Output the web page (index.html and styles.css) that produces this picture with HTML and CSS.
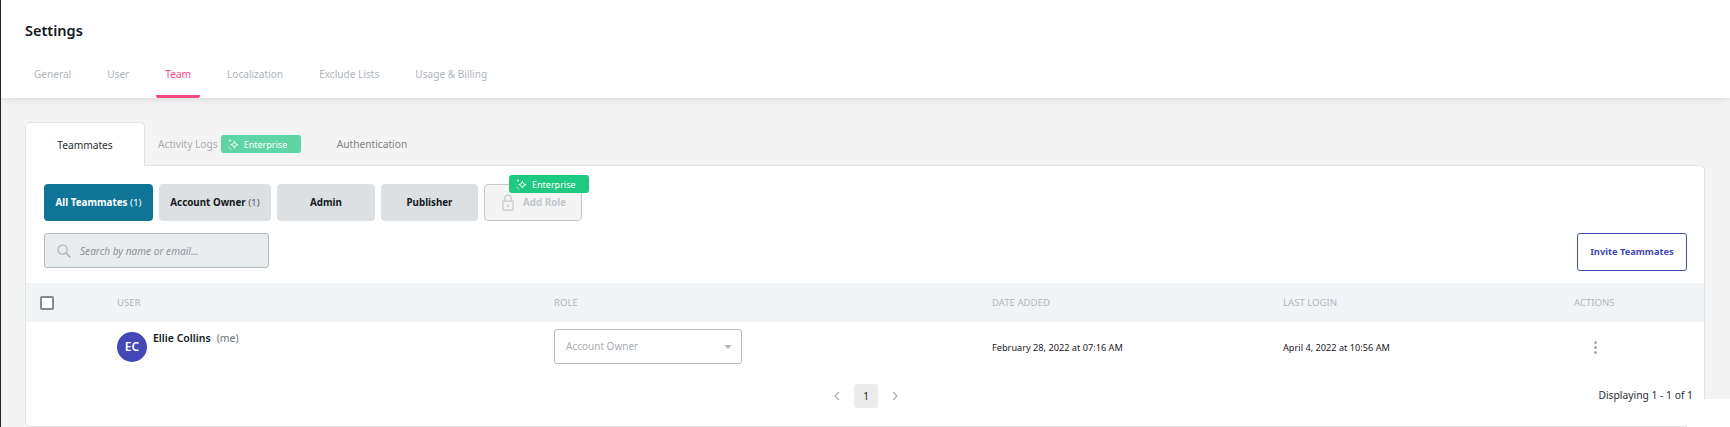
FILE: index.html
```html
<!DOCTYPE html>
<html lang="en">
<head>
<meta charset="UTF-8">
<meta name="viewport" content="width=device-width, initial-scale=1.0">
<title>Settings</title>
<link rel="stylesheet" href="styles.css">
</head>
<body>

<svg class="icon-defs" aria-hidden="true">
    <symbol id="sparkle" viewBox="0 0 12 12">
        <path d="M7 2.4 L8.1 5.1 L11 6.2 L8.1 7.3 L7 10 L5.9 7.3 L3 6.2 L5.9 5.1 Z" fill="none" stroke="#fff" stroke-width="1"/>
        <circle cx="2.2" cy="1.6" r="1" fill="#fff"/>
        <circle cx="1.2" cy="9.4" r="0.8" fill="#fff"/>
        <circle cx="3.2" cy="11" r="0.6" fill="#fff"/>
    </symbol>
</svg>

<div class="page">
    <header class="top">
        <h1>Settings</h1>
        <nav class="nav">
            <a>General</a>
            <a>User</a>
            <a class="active">Team</a>
            <a>Localization</a>
            <a>Exclude Lists</a>
            <a>Usage &amp; Billing</a>
        </nav>
    </header>

    <main class="content">
        <div class="tabs">
            <div class="tab tab-active">Teammates</div>
            <div class="tab tab-logs">Activity Logs</div>
            <div class="badge badge-faded"><svg class="sparkle"><use href="#sparkle"/></svg>Enterprise</div>
            <div class="tab tab-auth">Authentication</div>
        </div>

        <section class="card">
            <div class="roles">
                <button class="role role-active">All Teammates <span class="count">(1)</span></button>
                <button class="role role-owner">Account Owner <span class="count">(1)</span></button>
                <button class="role role-admin">Admin</button>
                <button class="role role-publisher">Publisher</button>
                <button class="role role-add">
                    <svg class="lock" viewBox="0 0 14 20">
                        <path d="M3.2 8.5 V5 a3.8 3.8 0 0 1 7.6 0 V8.5" fill="none" stroke="#c6cacd" stroke-width="1.5"/>
                        <rect x="1" y="8.5" width="12" height="10.5" rx="1" fill="none" stroke="#c6cacd" stroke-width="1.5"/>
                        <circle cx="7" cy="13.8" r="1.2" fill="#c6cacd"/>
                    </svg>
                    Add Role
                    <span class="badge badge-float"><svg class="sparkle"><use href="#sparkle"/></svg>Enterprise</span>
                </button>
            </div>

            <div class="toolbar">
                <div class="search">
                    <svg class="search-icon" viewBox="0 0 14 14">
                        <circle cx="5.6" cy="5.6" r="4.6" fill="none" stroke="#a9aeb2" stroke-width="1.2"/>
                        <path d="M9 9 L13.2 13.2" stroke="#a9aeb2" stroke-width="1.4"/>
                    </svg>
                    <span>Search by name or email...</span>
                </div>
                <button class="invite">Invite Teammates</button>
            </div>

            <div class="row row-head">
                <div><span class="checkbox"></span></div>
                <div>USER</div>
                <div>ROLE</div>
                <div>DATE ADDED</div>
                <div>LAST LOGIN</div>
                <div>ACTIONS</div>
            </div>

            <div class="row row-body">
                <div></div>
                <div class="user">
                    <span class="avatar">EC</span>
                    <span class="user-name">Ellie Collins</span>
                    <span class="user-me">(me)</span>
                </div>
                <div>
                    <div class="select">Account Owner<span class="caret"></span></div>
                </div>
                <div class="cell-date">February 28, 2022 at 07:16 AM</div>
                <div class="cell-date">April 4, 2022 at 10:56 AM</div>
                <div class="dots"><i></i><i></i><i></i></div>
            </div>

            <div class="pager">
                <div></div>
                <div class="pages">
                    <svg class="chevron" viewBox="0 0 6 10"><path d="M5 1 L1 5 L5 9" fill="none" stroke="#a5a9ad" stroke-width="1.1"/></svg>
                    <span class="page-num">1</span>
                    <svg class="chevron" viewBox="0 0 6 10"><path d="M1 1 L5 5 L1 9" fill="none" stroke="#a5a9ad" stroke-width="1.1"/></svg>
                </div>
                <div class="displaying">Displaying 1 - 1 of 1</div>
            </div>
        </section>
    </main>

    <div class="corner"></div>
</div>

</body>
</html>
```

FILE: styles.css
```css
* {
    box-sizing: border-box;
}

html, body {
    margin: 0;
    height: 427px;
    overflow: hidden;
}

body {
    font-family: "Noto Sans", "Open Sans", Arial, sans-serif;
    background-color: #f4f4f4;
    color: #1c2025;
}

.icon-defs {
    display: none;
}

.page {
    position: relative;
    height: 427px;
    border-left: 1px solid #22262b;
    overflow: hidden;
}

/* top bar */
.top {
    height: 98px;
    padding: 21px 0 0 24px;
    background-color: #fff;
    box-shadow: 0 1px 8px rgba(0, 0, 0, 0.12);
    position: relative;
}

.top h1 {
    margin: 0;
    font-size: 14.5px;
    line-height: 18px;
    font-weight: 600;
    color: #15181c;
}

.nav {
    display: flex;
    gap: 18px;
    margin-top: 16px;
}

.nav a {
    height: 43px;
    padding: 11px 9px 0;
    font-size: 10.1px;
    line-height: 16px;
    color: #aeb4bb;
    border-bottom: 3px solid transparent;
}

.nav a.active {
    color: #f9497f;
    border-bottom-color: #f9497f;
    border-radius: 0 0 2px 2px;
}

/* tabs */
.content {
    padding: 24px 25px 0 24px;
}

.tabs {
    display: flex;
    align-items: center;
    height: 44px;
    margin-bottom: -1px;
    position: relative;
    z-index: 1;
}

.tab {
    font-size: 10.2px;
    color: #7f8388;
}

.tab-active {
    display: flex;
    align-items: center;
    justify-content: center;
    width: 120px;
    height: 44px;
    background-color: #fff;
    border: 1px solid #e0e2e4;
    border-bottom: none;
    border-radius: 5px 5px 0 0;
    color: #2a2e33;
}

.tab-logs {
    margin-left: 13px;
    color: #a9adb1;
}

.tab-auth {
    margin-left: 36px;
}

.badge {
    display: inline-flex;
    align-items: center;
    width: 80px;
    height: 18px;
    padding-left: 7px;
    border-radius: 3px;
    font-size: 9px;
    font-weight: 400;
    color: #fff;
    background-color: #1fc97f;
}

.badge-faded {
    margin-left: 3px;
    background-color: #5fd5a3;
}

.badge-float {
    position: absolute;
    top: -10px;
    left: 24px;
}

.sparkle {
    width: 11px;
    height: 11px;
    margin-right: 5px;
}

/* card */
.card {
    height: 262px;
    padding-top: 18px;
    background-color: #fff;
    border: 1px solid #e0e2e4;
    border-radius: 0 5px 5px 5px;
}

.roles {
    display: flex;
    gap: 6px;
    padding-left: 18px;
}

button {
    font-family: inherit;
    cursor: pointer;
}

.role {
    height: 37px;
    padding: 0;
    border: none;
    border-radius: 4px;
    font-size: 9.8px;
    font-weight: 700;
    background-color: #dce0e3;
    color: #15181c;
}

.role .count {
    font-weight: 400;
    color: #555b61;
}

.role-active {
    width: 109px;
    background-color: #0e7596;
    color: #fff;
}

.role-active .count {
    color: #fff;
}

.role-owner {
    width: 112px;
}

.role-admin {
    width: 98px;
}

.role-publisher {
    width: 97px;
}

.role-add {
    position: relative;
    display: flex;
    align-items: center;
    gap: 9px;
    width: 98px;
    padding-left: 17px;
    background-color: #f4f4f4;
    border: 1px solid #c4c8cb;
    color: #c2c7cb;
}

.lock {
    width: 12px;
    height: 17px;
}

.toolbar {
    display: flex;
    justify-content: space-between;
    align-items: flex-start;
    margin-top: 12px;
    padding: 0 17px 0 18px;
}

.search {
    display: flex;
    align-items: center;
    gap: 9px;
    width: 225px;
    height: 35px;
    padding-left: 12px;
    background-color: #e9edf0;
    border: 1px solid #b5babd;
    border-radius: 3px;
    font-size: 10.1px;
    font-style: italic;
    color: #8d9296;
}

.search-icon {
    width: 14px;
    height: 14px;
}

.invite {
    width: 110px;
    height: 38px;
    padding: 0 0 2px;
    background-color: #fff;
    border: 1px solid #4447b6;
    border-radius: 3px;
    font-size: 9.3px;
    font-weight: 700;
    color: #4447b6;
}

/* table */
.row {
    display: grid;
    grid-template-columns: 91px 437px 438px 291px 291px 1fr;
    align-items: center;
}

.row-head {
    height: 39px;
    margin-top: 12px;
    background-color: #f1f4f7;
    font-size: 9.6px;
    color: #b1b6bc;
}

.checkbox {
    display: block;
    width: 14px;
    height: 14px;
    margin-left: 14px;
    background-color: #fff;
    border: 2px solid #85898d;
    border-radius: 2px;
}

.row-body {
    height: 62px;
    padding-top: 7px;
    align-items: start;
    font-size: 9.2px;
    color: #1c2025;
}

.user {
    display: flex;
    align-items: flex-start;
    margin-top: 3px;
    font-size: 10.5px;
    line-height: 12px;
}

.avatar {
    display: flex;
    align-items: center;
    justify-content: center;
    width: 30px;
    height: 30px;
    border-radius: 50%;
    background-color: #4447b6;
    color: #fff;
    font-size: 12px;
    font-weight: 600;
}

.user-name {
    margin-left: 6px;
    font-weight: 600;
    color: #15181c;
}

.user-me {
    margin-left: 6px;
    color: #6f7479;
}

.select {
    position: relative;
    width: 188px;
    height: 35px;
    padding-left: 11px;
    line-height: 32px;
    background-color: #fff;
    border: 1px solid #b9bcbf;
    border-radius: 3px;
    font-size: 10px;
    color: #a9adb1;
}

.caret {
    position: absolute;
    right: 9px;
    top: 15px;
    border-left: 4px solid transparent;
    border-right: 4px solid transparent;
    border-top: 4px solid #b3b6b9;
}

.cell-date {
    margin-top: 12px;
    line-height: 14px;
}

.dots {
    display: flex;
    flex-direction: column;
    gap: 2px;
    margin: 12px 0 0 20px;
}

.dots i {
    display: block;
    width: 3px;
    height: 3px;
    border-radius: 50%;
    background-color: #a5a9ad;
}

.pager {
    display: grid;
    grid-template-columns: 1fr auto 1fr;
    align-items: center;
}

.pages {
    display: flex;
    align-items: center;
    gap: 14px;
    height: 24px;
    padding-left: 2px;
}

.chevron {
    width: 6px;
    height: 10px;
}

.page-num {
    width: 24px;
    height: 24px;
    line-height: 24px;
    text-align: center;
    font-size: 10px;
    background-color: #ececec;
    border-radius: 3px;
}

.displaying {
    justify-self: end;
    padding-right: 11px;
    margin-top: -2px;
    font-size: 10.3px;
    color: #2a2e33;
}

/* white patch over the bottom right corner */
.corner {
    position: absolute;
    right: 0;
    bottom: 0;
    width: 43px;
    height: 28px;
    background-color: #fff;
}
```
